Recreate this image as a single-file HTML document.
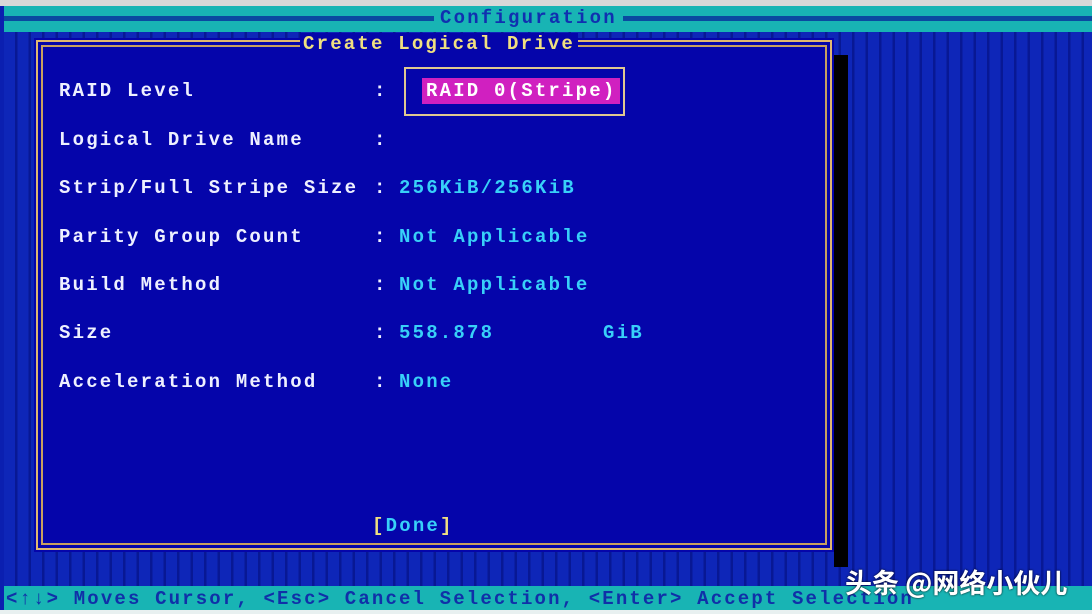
<!DOCTYPE html>
<html><head><meta charset="utf-8"><style>
*{margin:0;padding:0;box-sizing:border-box}
body{width:1092px;height:614px;overflow:hidden;position:relative;background:#0b1fb0;font-family:"Liberation Mono",monospace;font-weight:bold}
.bg{position:absolute;left:4px;top:30px;width:1088px;height:556px;background:repeating-linear-gradient(90deg,#0e26b8 0,#0e26b8 11px,#081894 11px,#081894 13.5px)}
.top{position:absolute;left:0;top:0;width:1092px;height:6px;background:#d8d8d8}
.band{position:absolute;left:4px;top:6px;width:1088px;height:26px;background:#18b4b4}
.band .ln{position:absolute;left:0;right:0;top:10px;height:5px;background:#0a4aa0}
.t{position:absolute;font-size:19px;letter-spacing:2.2px;white-space:pre;line-height:22px}
.cfg{left:434px;top:7px;color:#1030b0;background:#18b4b4;padding:0 6px}
.dlg{position:absolute;left:34px;top:38px;width:800px;height:514px;background:#0505aa}
.b1{position:absolute;left:36px;top:40px;width:796px;height:510px;border:2px solid #e0b870}
.b2{position:absolute;left:41px;top:45px;width:786px;height:500px;border:2px solid #c8a060}
.shadow{position:absolute;left:834px;top:55px;width:14px;height:512px;background:#000}
.title{left:300px;top:33px;color:#f0e080;background:#0505aa;padding:0 3px}
.l{color:#eef0ff;left:59px}
.c{color:#eef0ff;left:374px}
.v{color:#38d0f8;left:399px}
.box{position:absolute;left:404px;top:67px;width:221px;height:49px;border:2px solid #e0c890}
.hl{position:absolute;left:422px;top:78px;width:198px;height:26px;background:#d020c0}
.bot{position:absolute;left:4px;top:586px;width:1088px;height:24px;background:#18b4b4}
.btxt{left:6px;top:588px;color:#1030a8;font-size:19px;letter-spacing:2.15px}
.wm{position:absolute;left:845px;top:562px;font-family:"Noto Sans CJK SC",sans-serif;font-size:27px;color:#fff;font-weight:bold;text-shadow:0 0 2px #000}
.white{position:absolute;left:0;top:610px;width:1092px;height:4px;background:#e8f0f0}
</style></head><body>
<div class="bg"></div>
<div class="top"></div>
<div class="band"><div class="ln"></div></div>
<div class="t cfg">Configuration</div>
<div class="shadow"></div>
<div class="dlg"></div>
<div class="b1"></div><div class="b2"></div>
<div class="t title">Create Logical Drive</div>
<div class="box"></div><div class="hl"></div>
<div class="t l" style="top:80px">RAID Level</div>
<div class="t c" style="top:80px">:</div>
<div class="t" style="left:426px;top:80px;color:#fff">RAID 0(Stripe)</div>
<div class="t l" style="top:129px">Logical Drive Name</div>
<div class="t c" style="top:129px">:</div>
<div class="t l" style="top:177px">Strip/Full Stripe Size</div>
<div class="t c" style="top:177px">:</div>
<div class="t v" style="top:177px">256KiB/256KiB</div>
<div class="t l" style="top:226px">Parity Group Count</div>
<div class="t c" style="top:226px">:</div>
<div class="t v" style="top:226px">Not Applicable</div>
<div class="t l" style="top:274px">Build Method</div>
<div class="t c" style="top:274px">:</div>
<div class="t v" style="top:274px">Not Applicable</div>
<div class="t l" style="top:322px">Size</div>
<div class="t c" style="top:322px">:</div>
<div class="t v" style="top:322px">558.878</div>
<div class="t v" style="left:603px;top:322px">GiB</div>
<div class="t l" style="top:371px">Acceleration Method</div>
<div class="t c" style="top:371px">:</div>
<div class="t v" style="top:371px">None</div>
<div class="t" style="left:372px;top:515px;color:#f0e080">[<span style="color:#38d0f8">Done</span>]</div>
<div class="bot"></div>
<div class="t btxt">&lt;↑↓&gt; Moves Cursor, &lt;Esc&gt; Cancel Selection, &lt;Enter&gt; Accept Selection</div>
<div class="wm">头条 @网络小伙儿</div>
<div class="white"></div>
</body></html>
